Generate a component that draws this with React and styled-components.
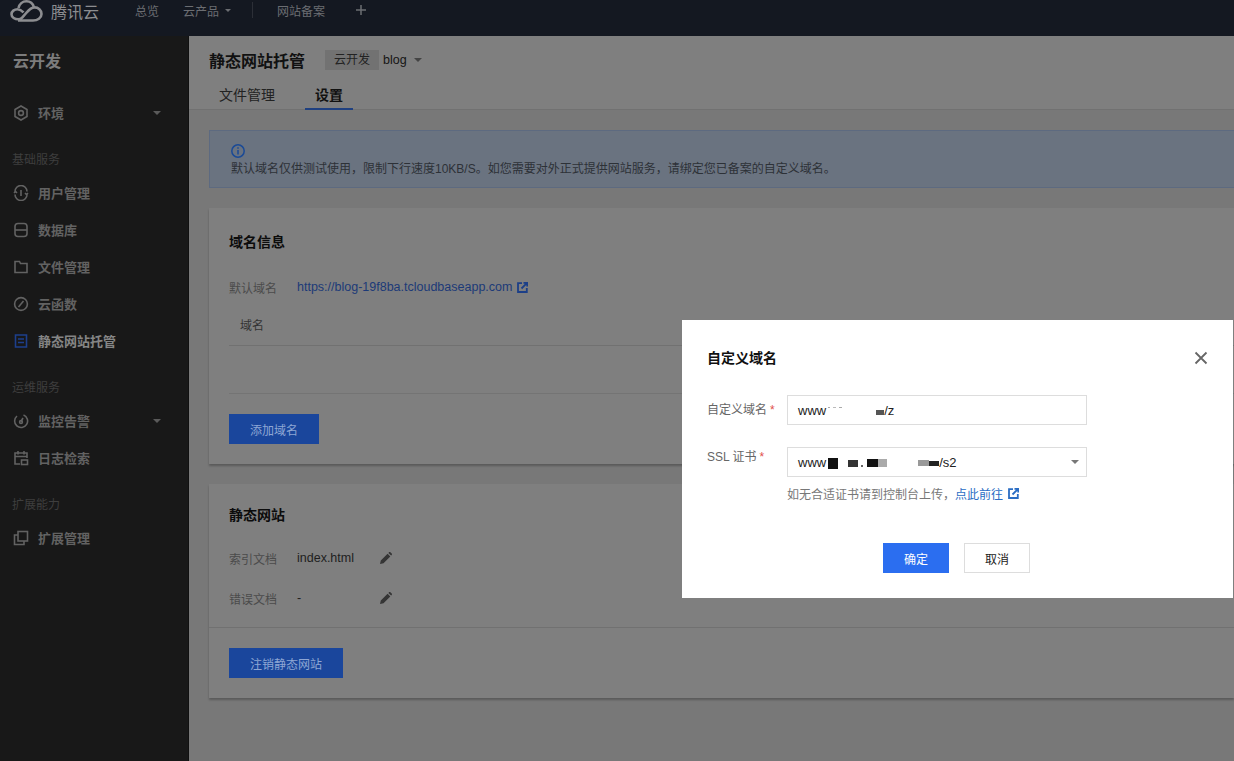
import React from 'react';
import styled, { createGlobalStyle } from 'styled-components';

const GlobalStyle = createGlobalStyle`
	html, body {
		margin: 0;
		padding: 0;
		background: #787878;
	}
	* {
		box-sizing: border-box;
	}
	body {
		font-family: "Liberation Sans", "Noto Sans CJK SC", sans-serif;
	}
`;

const Page = styled.div`
	position: relative;
	width: 1234px;
	height: 761px;
	overflow: hidden;
	display: flex;
	flex-direction: column;
`;

const TopBar = styled.header`
	flex: 0 0 36px;
	display: flex;
	align-items: flex-start;
	padding-left: 10px;
	background: #141821;
	color: #6b6d72;
	font-size: 12px;
`;

const Brand = styled.div`
	display: flex;
	align-items: center;
	height: 21px;
	gap: 8px;
	width: 125px;
	font-size: 16px;
	color: #8c8d90;
`;

const TopLink = styled.div`
	display: flex;
	align-items: center;
	height: 20px;
	gap: 6px;
	margin-right: ${p => p.$gap}px;
`;

const TopDivider = styled.div`
	width: 1px;
	height: 16px;
	margin: 2px 24px 0 0;
	background: #2c2f37;
`;

const Body = styled.div`
	flex: 1;
	display: flex;
	min-height: 0;
`;

const Sidebar = styled.aside`
	flex: 0 0 189px;
	background: #181818;
	border-right: 1px solid #101010;
`;

const SideTitle = styled.div`
	height: 50px;
	padding-left: 13px;
	line-height: 51px;
	font-size: 16px;
	font-weight: 700;
	color: #7c7c7c;
	margin-bottom: 8px;
`;

const SideGroup = styled.div`
	height: 29px;
	margin-top: 14px;
	padding-left: 12px;
	line-height: 31px;
	font-size: 12px;
	color: #3e3e3e;
`;

const SideRow = styled.div`
	display: flex;
	align-items: center;
	height: 37px;
	padding-left: 13px;
	gap: 9px;
	font-size: 13px;
	font-weight: 700;
	color: ${p => (p.$active ? '#858585' : '#626262')};
`;

const Arrow = styled.span`
	width: 0;
	height: 0;
	margin-left: auto;
	margin-right: ${p => p.$right || 0}px;
	border-left: ${p => p.$size || 4}px solid transparent;
	border-right: ${p => p.$size || 4}px solid transparent;
	border-top: ${p => p.$size || 4}px solid ${p => p.$color || '#5a5a5a'};
`;

const Main = styled.main`
	flex: 1;
	min-width: 0;
	background: #787878;
`;

const MainHeader = styled.div`
	height: 74px;
	background: #7f7f7f;
	border-bottom: 1px solid #717171;
`;

const TitleRow = styled.div`
	display: flex;
	align-items: center;
	height: 47px;
	margin-bottom: 1px;
	padding-left: 20px;
`;

const PageTitle = styled.h1`
	margin: 0 20px 0 0;
	font-size: 16px;
	font-weight: 700;
	color: #111;
`;

const Tag = styled.span`
	width: 54px;
	height: 20px;
	line-height: 20px;
	text-align: center;
	font-size: 12px;
	background: #727272;
	color: #222;
`;

const EnvName = styled.span`
	margin-left: 4px;
	font-size: 12.5px;
	color: #151515;
`;

const EnvArrow = styled(Arrow)`
	margin-left: 7px;
`;

const Tabs = styled.nav`
	display: flex;
	height: 26px;
	padding-left: 20px;
	gap: 20px;
`;

const Tab = styled.div`
	height: 26px;
	padding: 0 10px;
	line-height: 22px;
	font-size: 14px;
	font-weight: ${p => (p.$active ? 700 : 400)};
	color: ${p => (p.$active ? '#111' : '#222')};
	border-bottom: 2px solid ${p => (p.$active ? '#1f4080' : 'transparent')};
`;

const Content = styled.div`
	padding: 20px 0 0 20px;
`;

const Notice = styled.div`
	height: 58px;
	padding: 13px 0 0 21px;
	margin-bottom: 20px;
	background: #6a7380;
	border: 1px solid #5d6a80;
	border-right: 0;
	color: #2d3137;
	font-size: 12px;
`;

const NoticeText = styled.div`
	line-height: 18px;
	margin-top: 2px;
`;

const Card = styled.section`
	padding: ${p => p.$top}px 0 20px 20px;
	margin-bottom: 20px;
	background: #7f7f7f;
	box-shadow: 0 2px 2px rgba(0, 0, 0, 0.25);
`;

const CardTitle = styled.h2`
	margin: 0;
	line-height: 20px;
	font-size: 14px;
	font-weight: 700;
	color: #0c0c0c;
`;

const InfoRow = styled.div`
	display: flex;
	align-items: center;
	height: 20px;
	margin-top: ${p => p.$top}px;
	font-size: 12px;
`;

const InfoLabel = styled.span`
	width: 68px;
	color: #4b4b4b;
`;

const InfoValue = styled.span`
	width: 83px;
	font-size: 12.5px;
	color: #1e1e1e;
`;

const InfoLink = styled.a`
	font-size: 12.5px;
	color: #1c3a78;
`;

const IconGap = styled.span`
	display: inline-flex;
	margin-left: 5px;
`;

const DomainTable = styled.div`
	margin-top: 9px;
`;

const TableHead = styled.div`
	height: 40px;
	padding-left: 11px;
	line-height: 41px;
	font-size: 12px;
	color: #333;
	border-bottom: 1px solid #717171;
`;

const TableEmpty = styled.div`
	height: 48px;
	border-bottom: 1px solid #747474;
`;

const PrimaryButton = styled.button`
	display: block;
	width: ${p => p.$width}px;
	height: 30px;
	margin-top: 20px;
	padding: 0;
	border: 0;
	font: inherit;
	font-size: 12px;
	background: #1a469c;
	color: #8ea6d4;
`;

const CardDivider = styled.div`
	height: 1px;
	margin: 19px 0 0 -20px;
	background: #717171;
`;

const Modal = styled.div`
	position: absolute;
	left: 682px;
	top: 320px;
	width: 551px;
	height: 278px;
	padding: 28px 25px 0;
	background: #fff;
`;

const ModalTitle = styled.h3`
	margin: 0 0 27px;
	line-height: 20px;
	font-size: 14px;
	font-weight: 700;
	color: #111;
`;

const CloseButton = styled.div`
	position: absolute;
	top: 31px;
	right: 25px;
	display: flex;
`;

const Field = styled.div`
	display: flex;
	align-items: flex-start;
	margin-bottom: ${p => p.$bottom}px;
`;

const FieldLabel = styled.label`
	flex: 0 0 80px;
	padding-top: ${p => p.$top}px;
	line-height: 20px;
	font-size: 12px;
	color: #666;
`;

const Star = styled.span`
	margin-left: 3px;
	color: #e1504a;
`;

const TextBox = styled.div`
	position: relative;
	display: flex;
	align-items: center;
	width: 300px;
	height: 30px;
	padding-left: 10px;
	border: 1px solid #ddd;
	background: #fff;
	font-size: 13px;
	color: #222;
`;

const Blot = styled.span`
	display: inline-block;
	flex: none;
	width: ${p => p.$w}px;
	height: ${p => p.$h}px;
	margin-left: ${p => p.$gap}px;
	margin-top: ${p => p.$y}px;
	background: ${p => p.$c};
`;

const SelectArrow = styled(Arrow)`
	margin-right: 7px;
`;

const Hint = styled.div`
	display: flex;
	align-items: center;
	height: 20px;
	margin: 6px 0 0 80px;
	font-size: 12px;
	color: #777;
`;

const HintLink = styled.a`
	color: #2a6dc4;
`;

const ModalFooter = styled.div`
	display: flex;
	justify-content: center;
	gap: 15px;
	margin: 40px 2px 0 0;
`;

const ModalButton = styled.button`
	width: 66px;
	height: 30px;
	padding: 0;
	border: 1px solid ${p => (p.$primary ? '#2b6ef0' : '#ddd')};
	font: inherit;
	font-size: 12px;
	background: ${p => (p.$primary ? '#2b6ef0' : '#fff')};
	color: ${p => (p.$primary ? '#fff' : '#222')};
`;

const Icon = ({ children, size = 16 }) => (
	<svg width={size} height={size} viewBox="0 0 16 16" fill="none" stroke="currentColor" strokeWidth="1.6" style={{ flex: 'none' }}>
		{children}
	</svg>
);

const CloudLogo = () => (
	<svg width="33" height="22" viewBox="0 0 33 22" fill="none" stroke="#8c8d90" strokeWidth="2.6">
		<path d="M8 20.500h15c4.500 0 8.500-2.600 8.500-6.600 0-3.900-3.300-6.500-6.900-6.500-3.400 0-5.400 2-8.400 5.600l-4 4.600c-1 1.100-2.300 1.700-4 1.700-3.200 0-6.700-1.800-6.700-5 0-3 2.900-5.100 6-5.100 2.600 0 4.300 1.300 6 3.100" />
		<path d="M8.500 8c.8-3.800 4-6.700 8-6.700 3.600 0 6.400 2.300 7.400 5.900" />
	</svg>
);

const ExternalIcon = ({ color }) => (
	<svg width="11" height="11" viewBox="0 0 11 11" fill="none" stroke={color} strokeWidth="1.800">
		<path d="M5 1.200H1v8.800h8.800V6" />
		<path d="M4.500 6.500 9.800 1.200M6.500 .8h3.700v3.700" />
	</svg>
);

const PencilIcon = () => (
	<svg width="12" height="12" viewBox="0 0 12 12" fill="#353535">
		<path d="M0 12l.8-3.500L7.600 1.700l2.700 2.700-6.800 6.800zM8.400.9l.6-.6c.4-.4 1-.4 1.400 0l1.300 1.300c.4.400.4 1 0 1.400l-.6.6z" />
	</svg>
);

const InfoIcon = () => (
	<svg width="14" height="14" viewBox="0 0 14 14" fill="none" stroke="#1a4a96" strokeWidth="1.500" style={{ display: 'block' }}>
		<circle cx="7" cy="7" r="6.200" />
		<path d="M7 6v4.400M7 3.200v1.500" />
	</svg>
);

const sideIcons = {
	env: (
		<Icon>
			<path d="M8 1l6 3.500v7L8 15l-6-3.500v-7z" />
			<circle cx="8" cy="8" r="2.400" />
		</Icon>
	),
	user: (
		<Icon>
			<path d="M2 6.500A6 6 0 0 1 14 6.500M14 9.500A6 6 0 0 1 2 9.500M1 8l1.500-1.500L4 8M12 8l1.500 1.500L15 8" />
			<path d="M8 5v6" />
		</Icon>
	),
	database: (
		<Icon>
			<rect x="2" y="1.500" width="12" height="13" rx="3" />
			<path d="M2 8h12" />
		</Icon>
	),
	folder: (
		<Icon>
			<path d="M2 2.500h4.500l1 2H14v9H2z" />
		</Icon>
	),
	fn: (
		<Icon>
			<circle cx="8" cy="8" r="6.400" />
			<path d="M5.500 11l5-6" />
		</Icon>
	),
	site: (
		<Icon>
			<path d="M2.500 2h11v12h-11zM5 6h6M5 9.500h6" stroke="#1d3f8c" />
		</Icon>
	),
	monitor: (
		<Icon>
			<path d="M10.500 2A6.500 6.500 0 1 1 4 3" />
			<path d="M10 5L8 8.500" />
			<circle cx="8" cy="9" r="1.400" />
		</Icon>
	),
	log: (
		<Icon>
			<path d="M7 14H2V3h12v5M5 1v3.500M11 1v3.500M2 6.500h12" />
			<rect x="8.500" y="10" width="6" height="4.500" />
		</Icon>
	),
	ext: (
		<Icon>
			<path d="M5 5H1.500v9.500H11V11" />
			<rect x="5" y="1.500" width="9.500" height="9.500" />
		</Icon>
	)
};

const firstBlots = [
	{ w: 2, h: 1, gap: 2, y: -5, c: '#aaa' },
	{ w: 3, h: 1, gap: 3, y: -5, c: '#bbb' },
	{ w: 3, h: 1, gap: 3, y: -5, c: '#aaa' },
	{ w: 8, h: 5, gap: 34, y: 5, c: '#555' }
];

const secondBlots = [
	{ w: 10, h: 11, gap: 2, y: 3, c: '#111' },
	{ w: 10, h: 7, gap: 10, y: 2, c: '#333' },
	{ w: 2, h: 2, gap: 3, y: 7, c: '#666' },
	{ w: 11, h: 8, gap: 4, y: 2, c: '#111' },
	{ w: 9, h: 8, gap: 0, y: 2, c: '#aaa' },
	{ w: 11, h: 6, gap: 31, y: 2, c: '#999' },
	{ w: 10, h: 5, gap: 0, y: 2, c: '#222' }
];

const SideItem = ({ icon, label, active, arrow }) => (
	<SideRow $active={active}>
		{sideIcons[icon]}
		<span>{label}</span>
		{arrow && <Arrow $right={27} />}
	</SideRow>
);

export default function App() {
	return (
		<Page>
			<GlobalStyle />
			<TopBar>
				<Brand>
					<CloudLogo />
					<span>腾讯云</span>
				</Brand>
				<TopLink $gap={24}>总览</TopLink>
				<TopLink $gap={21}>
					云产品
					<Arrow $size={3} $color="#6b6d72" />
				</TopLink>
				<TopDivider />
				<TopLink $gap={30}>网站备案</TopLink>
				<TopLink $gap={0}>
					<svg width="12" height="12" viewBox="0 0 12 12" stroke="#6b6d72" strokeWidth="1.500">
						<path d="M6 1v10M1 6h10" />
					</svg>
				</TopLink>
			</TopBar>
			<Body>
				<Sidebar>
					<SideTitle>云开发</SideTitle>
					<SideItem icon="env" label="环境" arrow />
					<SideGroup>基础服务</SideGroup>
					<SideItem icon="user" label="用户管理" />
					<SideItem icon="database" label="数据库" />
					<SideItem icon="folder" label="文件管理" />
					<SideItem icon="fn" label="云函数" />
					<SideItem icon="site" label="静态网站托管" active />
					<SideGroup>运维服务</SideGroup>
					<SideItem icon="monitor" label="监控告警" arrow />
					<SideItem icon="log" label="日志检索" />
					<SideGroup>扩展能力</SideGroup>
					<SideItem icon="ext" label="扩展管理" />
				</Sidebar>
				<Main>
					<MainHeader>
						<TitleRow>
							<PageTitle>静态网站托管</PageTitle>
							<Tag>云开发</Tag>
							<EnvName>blog</EnvName>
							<EnvArrow $color="#444" />
						</TitleRow>
						<Tabs>
							<Tab>文件管理</Tab>
							<Tab $active>设置</Tab>
						</Tabs>
					</MainHeader>
					<Content>
						<Notice>
							<InfoIcon />
							<NoticeText>默认域名仅供测试使用，限制下行速度10KB/S。如您需要对外正式提供网站服务，请绑定您已备案的自定义域名。</NoticeText>
						</Notice>
						<Card $top={24}>
							<CardTitle>域名信息</CardTitle>
							<InfoRow $top={25}>
								<InfoLabel>默认域名</InfoLabel>
								<InfoLink>https://blog-19f8ba.tcloudbaseapp.com</InfoLink>
								<IconGap>
									<ExternalIcon color="#1c3f88" />
								</IconGap>
							</InfoRow>
							<DomainTable>
								<TableHead>域名</TableHead>
								<TableEmpty />
							</DomainTable>
							<PrimaryButton $width={90}>添加域名</PrimaryButton>
						</Card>
						<Card $top={21}>
							<CardTitle>静态网站</CardTitle>
							<InfoRow $top={23}>
								<InfoLabel>索引文档</InfoLabel>
								<InfoValue>index.html</InfoValue>
								<PencilIcon />
							</InfoRow>
							<InfoRow $top={20}>
								<InfoLabel>错误文档</InfoLabel>
								<InfoValue>-</InfoValue>
								<PencilIcon />
							</InfoRow>
							<CardDivider />
							<PrimaryButton $width={114}>注销静态网站</PrimaryButton>
						</Card>
					</Content>
				</Main>
			</Body>
			<Modal>
				<ModalTitle>自定义域名</ModalTitle>
				<CloseButton>
					<svg width="14" height="14" viewBox="0 0 14 14" stroke="#666" strokeWidth="1.800">
						<path d="M1.500 1.500l11 11M12.500 1.500l-11 11" />
					</svg>
				</CloseButton>
				<Field $bottom={22}>
					<FieldLabel $top={5}>
						自定义域名<Star>*</Star>
					</FieldLabel>
					<TextBox>
						www
						{firstBlots.map((b, i) => (
							<Blot key={i} $w={b.w} $h={b.h} $gap={b.gap} $y={b.y} $c={b.c} />
						))}
						/z
					</TextBox>
				</Field>
				<Field $bottom={0}>
					<FieldLabel $top={0}>
						SSL 证书<Star>*</Star>
					</FieldLabel>
					<TextBox>
						www
						{secondBlots.map((b, i) => (
							<Blot key={i} $w={b.w} $h={b.h} $gap={b.gap} $y={b.y} $c={b.c} />
						))}
						/s2
						<SelectArrow $color="#777" />
					</TextBox>
				</Field>
				<Hint>
					如无合适证书请到控制台上传，
					<HintLink>点此前往</HintLink>
					<IconGap>
						<ExternalIcon color="#2a6dc4" />
					</IconGap>
				</Hint>
				<ModalFooter>
					<ModalButton $primary>确定</ModalButton>
					<ModalButton>取消</ModalButton>
				</ModalFooter>
			</Modal>
		</Page>
	);
}
